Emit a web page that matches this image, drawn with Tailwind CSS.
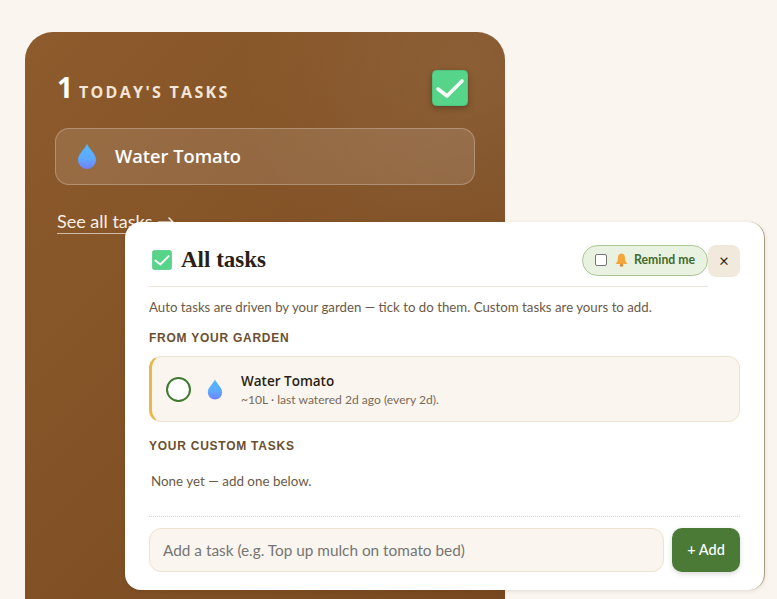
<!doctype html>
<html>

<head>
    <meta charset="UTF-8">
    <meta name="viewport" content="width=device-width, initial-scale=1.0">
    <title>Today's tasks</title>
    <script src="https://cdn.jsdelivr.net/npm/@tailwindcss/browser@4"></script>
</head>

<body class="bg-[#faf5ee] font-['Lato','Open_Sans',sans-serif]">
    <div class="relative h-[599px] w-[777px] overflow-hidden pl-[25px] pt-[32px]">
        <!-- garden card -->
        <div class="h-[600px] w-[480px] rounded-[28px] bg-[radial-gradient(circle_at_92%_6%,rgba(255,255,255,0.07),transparent_32%),linear-gradient(135deg,#8d5b2c,#774820)] px-[30px] pt-[34px]">
            <div class="flex h-[44px] items-center justify-between pr-[7px]">
                <div class="flex items-baseline gap-[6px] pl-[2px] font-['Open_Sans',sans-serif] text-white">
                    <span class="text-[28px] font-bold leading-none">1</span>
                    <span class="text-[16px] font-bold uppercase tracking-[2.3px] text-[#f3e5d8]">Today's tasks</span>
                </div>
                <svg width="36" height="36" viewBox="0 0 36 36" class="drop-shadow-[0_2px_3px_rgba(0,0,0,0.3)]">
                    <rect x="0.5" y="0.5" width="35" height="35" rx="4" fill="#55d48a" stroke="#4cc580" />
                    <path d="M6 19 L15 26 L30 11" fill="none" stroke="#f7fbf8" stroke-width="3.6" stroke-linecap="round" stroke-linejoin="round" />
                </svg>
            </div>
            <div class="mt-[18px] flex h-[57px] items-center gap-[18px] rounded-[14px] border border-white/25 bg-white/12 pl-[21px]">
                <svg width="20" height="25" viewBox="0 0 20 25">
                    <defs>
                        <linearGradient id="drop1" x1="0" y1="0" x2="0" y2="1">
                            <stop offset="0" stop-color="#52baff" />
                            <stop offset="0.6" stop-color="#5ea8ff" />
                            <stop offset="1" stop-color="#7280ff" />
                        </linearGradient>
                    </defs>
                    <path d="M10 0 C13 6 19 10 19 16 A9 9 0 0 1 1 16 C1 10 7 6 10 0 Z" fill="url(#drop1)" />
                </svg>
                <span class="mb-[2px] font-['Open_Sans',sans-serif] text-[18.25px] font-semibold text-white">Water Tomato</span>
            </div>
            <div class="mt-[23px] pl-[2px]">
                <a class="border-b border-white/60 pb-[1px] text-[18px] text-[#f8eee4]">See all tasks →</a>
            </div>
        </div>

        <!-- all tasks modal -->
        <div class="absolute left-[125px] top-[222px] w-[640px] rounded-[16px] border-r border-[#a89a7c] bg-white pb-[18px] pl-[24px] pr-[24px] shadow-[0_1px_4px_rgba(60,40,20,0.12)]">
            <div class="relative mr-[32px] flex h-[65px] items-center border-b border-[#ece6d8] pt-[12px]">
                <svg width="20" height="20" viewBox="0 0 36 36" class="ml-[3px]">
                    <rect x="0.5" y="0.5" width="35" height="35" rx="5" fill="#55d48a" stroke="#4cc580" />
                    <path d="M6 19 L15 26 L30 11" fill="none" stroke="#f7fbf8" stroke-width="3.6" stroke-linecap="round" stroke-linejoin="round" />
                </svg>
                <h2 class="ml-[9px] mt-[1px] font-['Liberation_Serif',serif] text-[23px] font-bold text-[#2a1f14]">All tasks</h2>
                <label class="ml-auto flex h-[31px] w-[126px] items-center rounded-full border border-[#a9c795] bg-[#e9f2e1] pl-[12px]">
                    <span class="h-[12px] w-[12px] rounded-[2px] border border-[#767676] bg-white"></span>
                    <svg width="13" height="14" viewBox="0 0 13 14" class="ml-[8px]">
                        <path d="M6.5 0.5 C9 0.5 10 2.5 10 5 C10 8 11 9.5 12.5 11 L0.5 11 C2 9.5 3 8 3 5 C3 2.5 4 0.5 6.5 0.5 Z" fill="#f5a63a" />
                        <circle cx="6.5" cy="12.2" r="1.6" fill="#e0862a" />
                    </svg>
                    <span class="ml-[6px] text-[12.25px] font-bold text-[#3f6b2f]">Remind me</span>
                </label>
                <button class="absolute -right-[32px] top-[23px] flex h-[32px] w-[32px] items-center justify-center rounded-[8px] bg-[#f1eadc] text-[17px] text-[#2a1f14]">×</button>
            </div>
            <p class="mt-[11px] text-[13.25px] leading-[18px] text-[#6b5a47]">Auto tasks are driven by your garden — tick to do them. Custom tasks are yours to add.</p>
            <h3 class="mt-[14px] font-['Liberation_Sans',sans-serif] text-[12px] font-bold uppercase leading-[16px] tracking-[0.75px] text-[#6b5030]">From your garden</h3>
            <div class="mt-[10px] flex h-[66px] items-center rounded-[12px] border border-[#eee3cf] border-l-[3px] border-l-[#e8b84a] bg-[#faf5ee] pl-[14px]">
                <span class="h-[25px] w-[25px] rounded-full border-2 border-[#3f7a2e] bg-white"></span>
                <svg width="16" height="21" viewBox="0 0 20 25" class="ml-[16px]">
                    <defs>
                        <linearGradient id="drop2" x1="0" y1="0" x2="0" y2="1">
                            <stop offset="0" stop-color="#52baff" />
                            <stop offset="0.6" stop-color="#5ea8ff" />
                            <stop offset="1" stop-color="#7280ff" />
                        </linearGradient>
                    </defs>
                    <path d="M10 0 C13 6 19 10 19 16 A9 9 0 0 1 1 16 C1 10 7 6 10 0 Z" fill="url(#drop2)" />
                </svg>
                <div class="ml-[18px]">
                    <div class="mb-[1px] font-['Open_Sans',sans-serif] text-[13.5px] font-semibold leading-[20px] text-[#2a1f14]">Water Tomato</div>
                    <div class="text-[12.1px] leading-[16px] text-[#7a6a58]">~10L · last watered 2d ago (every 2d).</div>
                </div>
            </div>
            <h3 class="mt-[16px] font-['Liberation_Sans',sans-serif] text-[12px] font-bold uppercase leading-[16px] tracking-[0.75px] text-[#6b5030]">Your custom tasks</h3>
            <p class="mt-[18px] pl-[2px] text-[13.4px] leading-[18px] text-[#6b5a47]">None yet — add one below.</p>
            <div class="mt-[26px] flex gap-[8px] border-t border-dotted border-[#dcd6c8] pt-[11px]">
                <input class="h-[44px] flex-1 rounded-[12px] border border-[#eee3cf] bg-[#faf5ee] px-[13px] text-[15.35px] outline-none placeholder:text-[#757575]" placeholder="Add a task (e.g. Top up mulch on tomato bed)">
                <button class="h-[44px] w-[68px] rounded-[10px] bg-[#4a7a35] text-[14.5px] font-medium text-white shadow-[0_2px_5px_rgba(0,0,0,0.15)]">+ Add</button>
            </div>
        </div>
    </div>
</body>

</html>
